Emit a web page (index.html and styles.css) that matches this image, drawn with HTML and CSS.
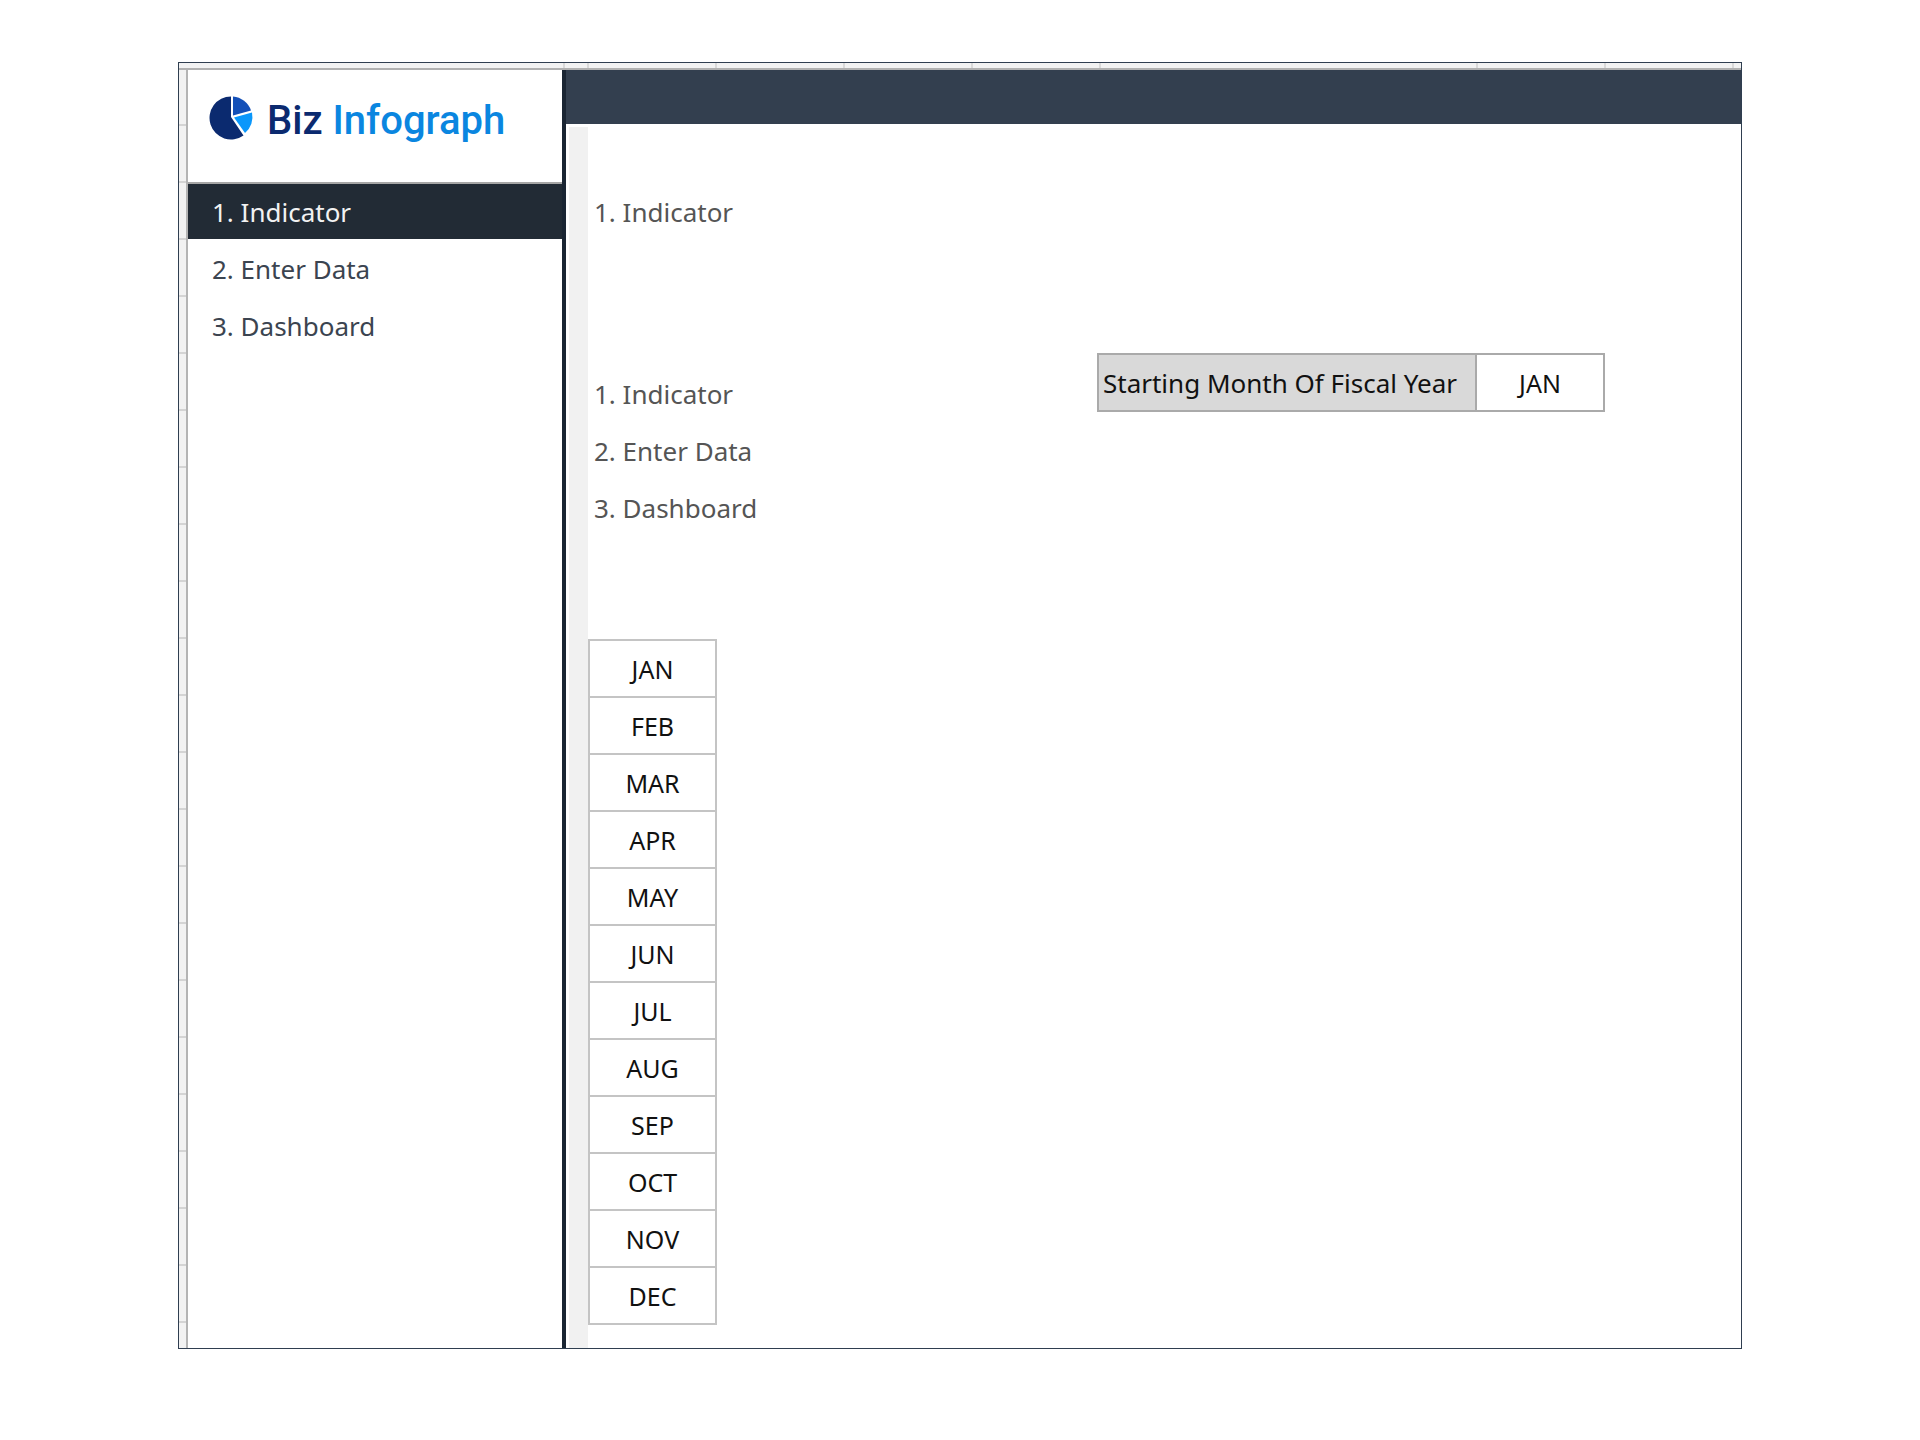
FILE: index.html
```html
<!DOCTYPE html>
<html lang="en">
<head>
<meta charset="utf-8">
<title>Biz Infograph - Indicator</title>
<link rel="stylesheet" href="styles.css">
</head>
<body>
<div class="workbook">
  <div class="column-ruler" aria-hidden="true">
    <span class="tick tick-nav"></span><span class="tick tick-gutter"></span><span class="tick"></span><span class="tick"></span><span class="tick"></span><span class="tick"></span><span class="tick tick-wide"></span><span class="tick"></span><span class="tick"></span>
  </div>
  <div class="workbook-body">
    <div class="row-ruler" aria-hidden="true"></div>
    <aside class="sidebar">
      <div class="brand">
        <svg class="brand-icon" width="46" height="46" viewBox="0 0 46 46" aria-hidden="true">
          <path fill="#0b2a6f" d="M22 1.500V22L34.500 40.500A21.500 21.500 0 1 1 22 1.500Z"/>
          <path fill="#1450b8" d="M24 1.500A21 21 0 0 1 42 15.500L24 20.500Z"/>
          <path fill="#0a97fb" d="M43 17.500A21 21 0 0 1 36 38L25 22.500Z"/>
        </svg>
        <span class="brand-name"><span class="brand-biz">Biz</span> Infograph</span>
      </div>
      <nav class="menu">
        <a class="menu-link active" href="#indicator">1. Indicator</a>
        <a class="menu-link" href="#enter-data">2. Enter Data</a>
        <a class="menu-link" href="#dashboard">3. Dashboard</a>
      </nav>
    </aside>
    <main class="main">
      <div class="banner"></div>
      <div class="sheet">
        <div class="gutter"></div>
        <div class="content">
          <h1 class="step">1. Indicator</h1>
          <div class="settings">
            <ul class="steps">
              <li class="step">1. Indicator</li>
              <li class="step">2. Enter Data</li>
              <li class="step">3. Dashboard</li>
            </ul>
            <div class="fiscal">
              <label class="fiscal-label" for="start-month">Starting Month Of Fiscal Year</label>
              <input class="fiscal-input" id="start-month" type="text" value="JAN">
            </div>
          </div>
          <table class="months">
            <tbody>
              <tr><td>JAN</td></tr>
              <tr><td>FEB</td></tr>
              <tr><td>MAR</td></tr>
              <tr><td>APR</td></tr>
              <tr><td>MAY</td></tr>
              <tr><td>JUN</td></tr>
              <tr><td>JUL</td></tr>
              <tr><td>AUG</td></tr>
              <tr><td>SEP</td></tr>
              <tr><td>OCT</td></tr>
              <tr><td>NOV</td></tr>
              <tr><td>DEC</td></tr>
            </tbody>
          </table>
        </div>
      </div>
    </main>
  </div>
</div>
</body>
</html>
```
FILE: styles.css
```css
* {
  box-sizing: border-box;
}

body {
  margin: 0;
  padding: 62px 178px;
  background: #fff;
  color: #111;
  font-family: "Noto Sans", "Open Sans", sans-serif;
  font-size: 26px;
  line-height: 32px;
}

.workbook {
  border: 1px solid #2f3e50;
}

/* Slivers of the sheet's row and column lines */
.column-ruler {
  display: flex;
  height: 7px;
  overflow: hidden;
  background: #f2f2f2;
  border-bottom: 2px solid #b0b0b0;
}

.tick {
  flex: none;
  width: 128px;
  border-right: 2px solid #d9d9d9;
}

.tick-nav {
  width: 386px;
}

.tick-gutter {
  width: 24px;
}

.tick-wide {
  width: 377px;
}

.workbook-body {
  display: flex;
}

.row-ruler {
  flex: none;
  width: 9px;
  border-right: 2px solid #b4b4b4;
  background: repeating-linear-gradient(#f2f2f2 0 54px, #d4d4d4 54px 56px, #f2f2f2 56px 57px);
}

.sidebar {
  flex: none;
  width: 378px;
  border-right: 4px solid #1a2533;
}

.brand {
  display: flex;
  gap: 12px;
  height: 114px;
  padding: 25px 0 0 21px;
  border-bottom: 2px solid #a6a6a6;
}

.brand-icon {
  flex: none;
}

.brand-name {
  color: #0a86e0;
  font-family: Roboto, sans-serif;
  font-size: 40px;
  font-weight: 500;
  line-height: 52px;
  white-space: nowrap;
}

.brand-biz {
  color: #0b2a6f;
}

.menu {
  display: grid;
  gap: 2px;
}

.menu-link {
  padding: 12px 24px 11px;
  color: #3b4450;
  text-decoration: none;
}

.menu-link.active {
  background: #222b35;
  color: #f2f2f2;
}

.main {
  display: flex;
  flex: 1;
  flex-direction: column;
  min-width: 0;
}

.banner {
  height: 54px;
  background: #333f4f;
}

.sheet {
  display: flex;
  flex: 1;
  padding-left: 3px;
}

.gutter {
  flex: none;
  width: 19px;
  margin-top: 3px;
  background: #f1f1f1;
}

.content {
  flex: 1;
  min-width: 0;
  padding: 60px 0 23px;
}

.step {
  margin: 0;
  padding: 12px 6px 13px;
  color: #555;
  font-size: 26px;
  font-weight: 400;
}

.settings {
  display: grid;
  grid-template-columns: 509px 508px;
  align-items: start;
  margin-top: 112px;
}

.steps {
  margin: 0;
  padding: 13px 0 0;
  list-style: none;
}

.fiscal {
  display: grid;
  grid-template-columns: 1fr 126px;
  border: 2px solid #aaa;
}

.fiscal-label {
  padding: 12px 4px 11px;
  background: #d9d9d9;
  border-right: 2px solid #aaa;
  white-space: nowrap;
}

.fiscal-input {
  width: 100%;
  padding: 0;
  border: 0;
  background: #fff;
  color: inherit;
  font: inherit;
  font-size: 25px;
  text-align: center;
}

.months {
  width: 129px;
  margin-top: 102px;
  border-collapse: collapse;
  font-size: 25px;
}

.months td {
  height: 57px;
  padding: 0;
  border: 2px solid #c4c4c4;
  text-align: center;
}
```
